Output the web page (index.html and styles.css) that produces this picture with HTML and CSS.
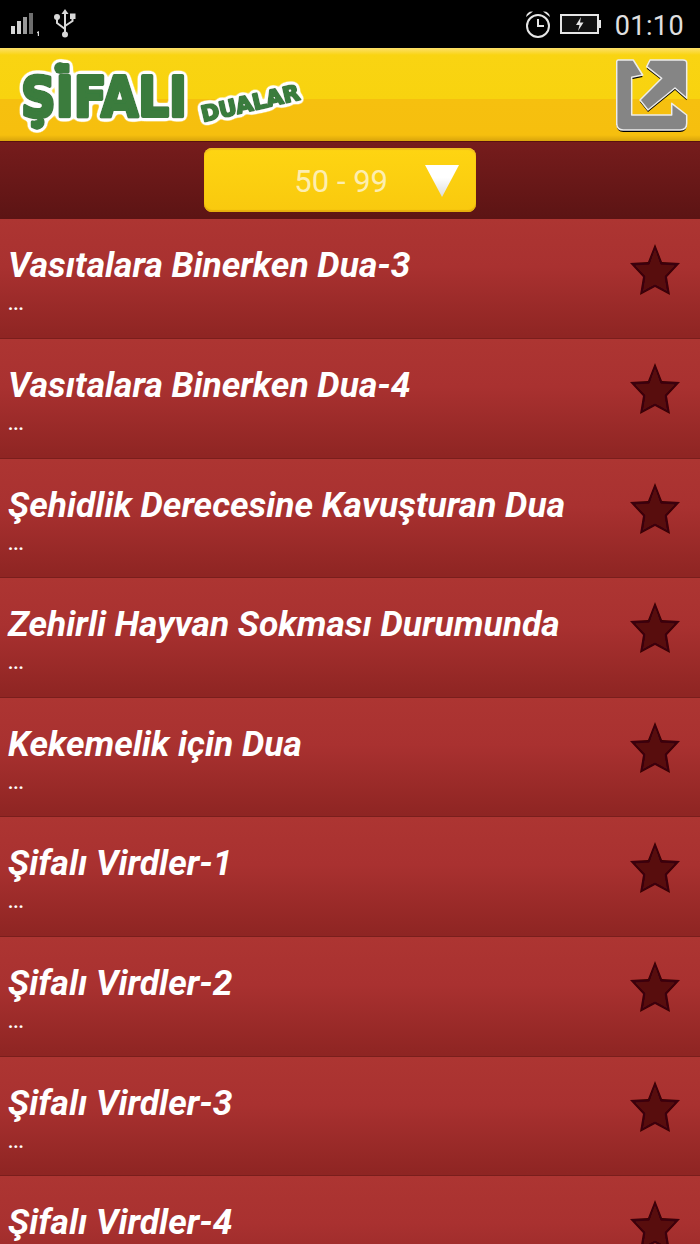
FILE: index.html
```html
<!DOCTYPE html>
<html lang="tr">

<head>
    <meta charset="UTF-8">
    <meta name="viewport" content="width=device-width, initial-scale=1.0">
    <title>Şifalı Dualar</title>
    <link rel="stylesheet" href="styles.css">
</head>

<body>
    <svg class="defs" width="0" height="0">
        <defs>
            <filter id="soft" x="-10%" y="-10%" width="120%" height="120%">
                <feGaussianBlur stdDeviation="0.7"/>
            </filter>
            <!-- blur + steep alpha = rounded white outline round the logo -->
            <filter id="logoOutline" x="-10%" y="-20%" width="120%" height="140%">
                <feGaussianBlur in="SourceAlpha" stdDeviation="2.400"/>
                <feComponentTransfer result="edge">
                    <feFuncA type="linear" slope="12" intercept="-0.6"/>
                </feComponentTransfer>
                <feFlood flood-color="#ffffff"/>
                <feComposite in2="edge" operator="in"/>
                <feMerge>
                    <feMergeNode/>
                    <feMergeNode in="SourceGraphic"/>
                </feMerge>
            </filter>
            <symbol id="star" viewBox="0 0 54 54">
                <path d="M27 1 L34 19 L52 20 L39 34 L42 52 L27 44 L12 52 L15 34 L2 20 L20 19 Z" fill="#3a0607" filter="url(#soft)"/>
                <path d="M27 6 L32.500 21.500 L47 22.500 L36.500 33.500 L39 48 L27 41.500 L15 48 L17.500 33.500 L7 22.500 L21.500 21.500 Z" fill="#590c0e" filter="url(#soft)"/>
            </symbol>
        </defs>
    </svg>

    <div class="status-bar">
        <div class="status-left">
            <svg class="signal" width="30" height="24" viewBox="0 0 30 24">
                <rect x="0" y="13" width="4" height="8" fill="#d8d8d8"/>
                <rect x="6" y="8" width="4" height="13" fill="#d0d0d0"/>
                <rect x="12" y="4" width="4" height="17" fill="#9a9a9a"/>
                <rect x="18" y="0" width="4" height="21" fill="#6e6e6e"/>
                <path d="M26 19 L28 18 V23 H26.800 V20 L26 20.300 Z" fill="#d8d8d8"/>
            </svg>
            <svg class="usb" width="24" height="29" viewBox="0 0 24 29">
                <path d="M12 2 V25 M12 20 L4 14 V9 M12 17 L19.500 12 V9" fill="none" stroke="#d8d8d8" stroke-width="2"/>
                <path d="M12 0 L15.500 5 H8.500 Z" fill="#d8d8d8"/>
                <circle cx="12" cy="25.500" r="3" fill="#d8d8d8"/>
                <circle cx="4" cy="8" r="3" fill="#d8d8d8"/>
                <rect x="17" y="4.500" width="5.500" height="5.500" fill="#d8d8d8"/>
            </svg>
        </div>
        <div class="status-right">
            <svg class="alarm" width="26" height="29" viewBox="0 0 26 29">
                <circle cx="13" cy="16" r="11" fill="none" stroke="#e6e6e6" stroke-width="2"/>
                <path d="M13 9 V16 H19" fill="none" stroke="#e6e6e6" stroke-width="2"/>
                <path d="M1 7 Q2 1 8 1.500 Z M25 7 Q24 1 18 1.500 Z" fill="#e6e6e6"/>
            </svg>
            <svg class="battery" width="41" height="21" viewBox="0 0 41 21">
                <rect x="1" y="1" width="37" height="18" fill="#111" stroke="#e6e6e6" stroke-width="2"/>
                <rect x="39" y="6" width="2" height="8" fill="#e6e6e6"/>
                <path d="M21 3 L16 11 H19.500 L18 17 L23.500 8.500 H20 Z" fill="#e6e6e6"/>
            </svg>
            <span class="clock">01:10</span>
        </div>
    </div>

    <header class="app-header">
        <svg class="logo" width="300" height="80" viewBox="0 0 300 80">
            <g filter="url(#logoOutline)">
                <circle cx="44" cy="11" r="6" class="logo-dot"/>
                <circle cx="21" cy="68" r="5" class="logo-dot"/>
                <text class="logo-main" x="5" y="59" textLength="166" lengthAdjust="spacingAndGlyphs">ŞİFALI</text>
                <text class="logo-sub" transform="translate(187 65) rotate(-13)">DUALAR</text>
            </g>
        </svg>
        <svg class="share" width="74" height="76" viewBox="0 0 74 76">
            <path d="M2.300 3 H17.300 L26.700 18 L15.700 20.300 V58 H55.700 V46.300 L70.700 58 V66.300 Q70.700 73 64 73 H7.300 Q0.700 73 0.700 66.300 V5 Q0.700 3 2.300 3 Z" fill="#000" transform="translate(0 2)"/>
            <path d="M2.300 3 H17.300 L26.700 18 L15.700 20.300 V58 H55.700 V46.300 L70.700 58 V66.300 Q70.700 73 64 73 H7.300 Q0.700 73 0.700 66.300 V5 Q0.700 3 2.300 3 Z" fill="#858585" stroke="#ececec" stroke-width="1.500" stroke-linejoin="round"/>
            <path d="M34 3 H67 Q70.700 3 70.700 6 V41.300 L59 31 L32 53 L24 43 L45.700 21.300 L30.700 9.700 Z" fill="#000" transform="translate(0 2)"/>
            <path d="M34 3 H67 Q70.700 3 70.700 6 V41.300 L59 31 L32 53 L24 43 L45.700 21.300 L30.700 9.700 Z" fill="#858585" stroke="#ececec" stroke-width="1.500" stroke-linejoin="round"/>
        </svg>
    </header>

    <div class="filter-bar">
        <div class="range-select">
            <span class="range-label">50 - 99</span>
            <svg class="range-arrow" width="34" height="32" viewBox="0 0 34 32">
                <defs>
                    <linearGradient id="arrowFill" x1="0" y1="0" x2="0" y2="1">
                        <stop offset="0.4" stop-color="#ffffff"/>
                        <stop offset="1" stop-color="#dcdcdc"/>
                    </linearGradient>
                </defs>
                <path d="M0 0 H34 L17 32 Z" fill="url(#arrowFill)"/>
            </svg>
        </div>
    </div>

    <ul class="dua-list">
        <li class="dua-row">
            <div class="dua-text"><div class="dua-title">Vasıtalara Binerken Dua-3</div><div class="dua-sub">...</div></div>
            <svg class="star"><use href="#star"/></svg>
        </li>
        <li class="dua-row">
            <div class="dua-text"><div class="dua-title">Vasıtalara Binerken Dua-4</div><div class="dua-sub">...</div></div>
            <svg class="star"><use href="#star"/></svg>
        </li>
        <li class="dua-row">
            <div class="dua-text"><div class="dua-title">Şehidlik Derecesine Kavuşturan Dua</div><div class="dua-sub">...</div></div>
            <svg class="star"><use href="#star"/></svg>
        </li>
        <li class="dua-row">
            <div class="dua-text"><div class="dua-title">Zehirli Hayvan Sokması Durumunda</div><div class="dua-sub">...</div></div>
            <svg class="star"><use href="#star"/></svg>
        </li>
        <li class="dua-row">
            <div class="dua-text"><div class="dua-title">Kekemelik için Dua</div><div class="dua-sub">...</div></div>
            <svg class="star"><use href="#star"/></svg>
        </li>
        <li class="dua-row">
            <div class="dua-text"><div class="dua-title">Şifalı Virdler-1</div><div class="dua-sub">...</div></div>
            <svg class="star"><use href="#star"/></svg>
        </li>
        <li class="dua-row">
            <div class="dua-text"><div class="dua-title">Şifalı Virdler-2</div><div class="dua-sub">...</div></div>
            <svg class="star"><use href="#star"/></svg>
        </li>
        <li class="dua-row">
            <div class="dua-text"><div class="dua-title">Şifalı Virdler-3</div><div class="dua-sub">...</div></div>
            <svg class="star"><use href="#star"/></svg>
        </li>
        <li class="dua-row">
            <div class="dua-text"><div class="dua-title">Şifalı Virdler-4</div><div class="dua-sub">...</div></div>
            <svg class="star"><use href="#star"/></svg>
        </li>
    </ul>
</body>

</html>
```

FILE: styles.css
```css
html,
body {
    height: 100%;
}

body {
    margin: 0;
    height: 1244px;
    overflow: hidden;
    font-family: Roboto, 'Liberation Sans', sans-serif;
    background-color: #a83230;
    color: white;
}

.defs {
    display: block;
    position: absolute;
}

.status-bar {
    height: 48px;
    background-color: #000;
    display: flex;
    justify-content: space-between;
    align-items: center;
    padding: 0 16px 0 11px;
    box-sizing: border-box;
}

.status-left,
.status-right {
    display: flex;
    align-items: center;
}

.status-left {
    gap: 12px;
}

.signal {
    margin-top: 1px;
}

.usb {
    margin-top: -1px;
}

.status-right {
    gap: 9px;
}

.clock {
    margin-left: 5px;
    margin-top: 3px;
    font-size: 27px;
    color: #e0e0e0;
    letter-spacing: 0.4px;
}

.app-header {
    height: 94px;
    box-sizing: border-box;
    display: flex;
    justify-content: space-between;
    align-items: center;
    padding: 0 10px 0 16px;
    background: linear-gradient(to bottom, #fde06a 0, #f9d412 7px, #f8d30f 51px, #f6c00f 51px, #f6bf0e 87px, #d9a40c 93px, #5a1010 93px);
}

.logo {
    margin-top: 4px;
}

.logo text,
.logo-dot {
    fill: #3a7c3e;
}

.logo text {
    font-family: 'DejaVu Sans', sans-serif;
    font-weight: bold;
    stroke: #3a7c3e;
    stroke-linejoin: round;
}

.logo-main {
    font-size: 56px;
    stroke-width: 4px;
}

.logo-sub {
    font-size: 22px;
    stroke-width: 2px;
}

.filter-bar {
    height: 77.4px;
    display: flex;
    justify-content: center;
    padding-top: 6px;
    box-sizing: border-box;
    background: linear-gradient(to bottom, #761c1c, #5c1414);
}

.range-select {
    width: 272px;
    height: 64px;
    margin-left: -20px;
    box-sizing: border-box;
    display: flex;
    align-items: center;
    justify-content: flex-end;
    gap: 38px;
    padding: 0 17px 0 0;
    border-radius: 8px;
    background: linear-gradient(to bottom, #fed512, #f9c90e);
    box-shadow: inset 0 -2px 1px #e5ad0c, inset 0 2px 1px #f0c020;
}

.range-label {
    font-size: 31px;
    margin-top: 2px;
    margin-right: -1px;
    color: #fdeeb0;
}

.range-arrow {
    margin-top: 2px;
}

.dua-list {
    list-style-type: none;
    margin: 0;
    padding: 0;
}

.dua-row {
    height: 119.6px;
    box-sizing: border-box;
    display: flex;
    justify-content: space-between;
    align-items: center;
    padding: 0 18px 0 8px;
    background: linear-gradient(to bottom, #ad3532 0, #a93130 40%, #8f2523 98%);
    border-bottom: 1px solid #7a1e1c;
}

.dua-text {
    align-self: flex-start;
    padding-top: 25px;
}

.dua-title {
    font-size: 35.4px;
    line-height: 42px;
    font-weight: bold;
    font-style: italic;
}

.dua-sub {
    font-size: 18px;
    line-height: 20px;
    font-weight: bold;
    margin-top: 8px;
}

.star {
    width: 54px;
    height: 54px;
    margin-top: -18px;
    flex-shrink: 0;
}
```
